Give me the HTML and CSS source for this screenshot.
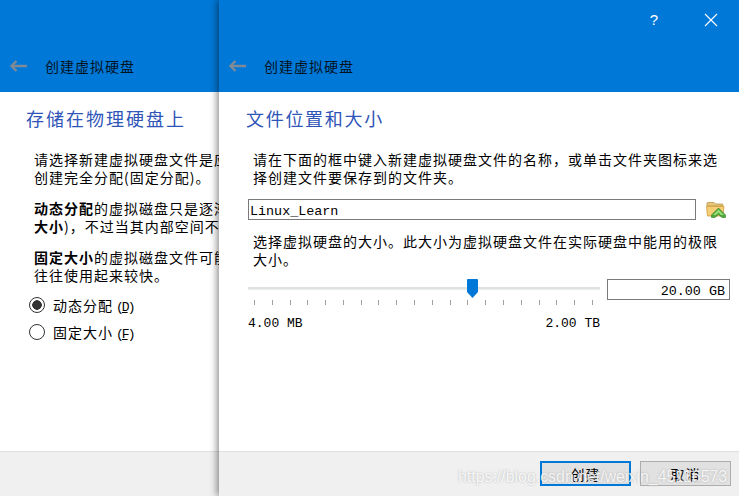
FILE: index.html
```html
<!DOCTYPE html>
<html lang="zh-CN">
<head>
    <meta charset="UTF-8">
    <meta name="viewport" content="width=device-width, initial-scale=1.0">
    <title>创建虚拟硬盘</title>
    <link rel="stylesheet" href="styles.css">
</head>
<body>
    <div class="desktop">
        <!-- window behind, cut off by the front one -->
        <div class="window back-window">
            <div class="header">
                <div class="title-row">
                    <svg class="back-arrow" width="17" height="12" viewBox="0 0 17 12"><path d="M6.5 1 1.5 6l5 5M2 6h15" fill="none" stroke="#7f8a96" stroke-width="2.4"/></svg>
                    <span class="header-title">创建虚拟硬盘</span>
                </div>
            </div>
            <div class="content back-content">
                <h2 class="page-title wide-title">存储在物理硬盘上</h2>
                <p class="text">请选择新建虚拟硬盘文件是应该根据使用状况来逐渐增大<br>创建完全分配(固定分配)。</p>
                <p class="text"><b>动态分配</b>的虚拟磁盘只是逐渐占用物理硬盘的空间<br><b>大小</b>)，不过当其内部空间不足时也不会自动缩减</p>
                <p class="text"><b>固定大小</b>的虚拟磁盘文件可能需要很长时间来建立<br>往往使用起来较快。</p>
                <div class="radio-group">
                    <div class="radio-row">
                        <span class="radio checked"></span>
                        <span class="radio-label">动态分配<span class="key">(<u>D</u>)</span></span>
                    </div>
                    <div class="radio-row">
                        <span class="radio"></span>
                        <span class="radio-label">固定大小<span class="key">(<u>F</u>)</span></span>
                    </div>
                </div>
            </div>
            <div class="footer"></div>
        </div>

        <div class="window front-window">
            <div class="header">
                <div class="window-buttons">
                    <span class="help">?</span>
                    <svg width="14" height="14" viewBox="0 0 14 14"><path d="M1 1l12 12M13 1 1 13" stroke="#fff" stroke-width="1.1" fill="none"/></svg>
                </div>
                <div class="title-row">
                    <svg class="back-arrow" width="17" height="12" viewBox="0 0 17 12"><path d="M6.5 1 1.5 6l5 5M2 6h15" fill="none" stroke="#7f8a96" stroke-width="2.4"/></svg>
                    <span class="header-title">创建虚拟硬盘</span>
                </div>
            </div>
            <div class="content front-content">
                <h2 class="page-title front-title">文件位置和大小</h2>
                <p class="text indent">请在下面的框中键入新建虚拟硬盘文件的名称，或单击文件夹图标来选<br>择创建文件要保存到的文件夹。</p>
                <div class="file-row">
                    <div class="field file-field">Linux_Learn</div>
                    <svg class="folder" width="20" height="18" viewBox="0 0 20 18">
                        <path d="M1 4V2.500Q1 1.500 2 1.500H8L9.500 3H16Q17 3 17 4V5H1Z" fill="#e8c878" stroke="#b8924a" stroke-width=".8"/>
                        <path d="M.5 5.500H18L17 15H1.500Z" fill="#f6ce74" stroke="#d09a40" stroke-width=".8"/>
                        <path d="M12.500 7 19.500 14V16.500H16L12.500 13.500 9 16.500H5.500V14Z" fill="#4fa83c" stroke="#2f7d26" stroke-width=".6"/>
                        <path d="M12.500 8.500 7 14H10L12.500 11.500 15 14H18Z" fill="#9adf7a"/>
                    </svg>
                </div>
                <p class="text indent size-text">选择虚拟硬盘的大小。此大小为虚拟硬盘文件在实际硬盘中能用的极限<br>大小。</p>
                <div class="size-row">
                    <div class="slider">
                        <div class="track">
                            <svg class="thumb" width="11" height="19" viewBox="0 0 11 19"><path d="M0 1Q0 0 1 0H10Q11 0 11 1V13L5.500 19 0 13Z" fill="#0078d7"/></svg>
                        </div>
                        <div class="ticks" id="ticks"></div>
                        <div class="range-labels"><span>4.00 MB</span><span>2.00 TB</span></div>
                    </div>
                    <div class="field size-field">20.00 GB</div>
                </div>
            </div>
            <div class="footer">
                <button class="btn btn-default">创建</button>
                <button class="btn">取消</button>
            </div>
            <div class="watermark">https://blog.csdn.net/weixin_45116573</div>
        </div>
    </div>

    <script>
        // 20 slider ticks
        const ticks = document.getElementById('ticks');
        for (let i = 0; i < 20; i++) {
            ticks.appendChild(document.createElement('i'));
        }
    </script>
</body>
</html>
```

FILE: styles.css
```css
* {
    margin: 0;
    padding: 0;
    box-sizing: border-box;
}

body {
    background-color: #fff;
    font-family: "Noto Sans CJK SC", sans-serif;
    color: #000;
    overflow: hidden;
}

.desktop {
    display: flex;
    width: 739px;
    height: 496px;
    overflow: hidden;
}

.window {
    display: flex;
    flex-direction: column;
    height: 100%;
    background-color: white;
}

.back-window {
    width: 219px;
    flex: none;
    overflow: hidden;
}

.front-window {
    flex: 1;
    position: relative;
    box-shadow: -2px 0 7px rgba(0, 0, 0, 0.45);
}

.header {
    height: 92px;
    flex: none;
    display: flex;
    flex-direction: column;
    justify-content: flex-end;
    background-color: #0078d7;
}

.window-buttons {
    display: flex;
    justify-content: flex-end;
    align-items: center;
    gap: 46px;
    padding-right: 21px;
    margin-bottom: 27px;
}

.help {
    color: white;
    font-family: "Liberation Sans", sans-serif;
    font-size: 15px;
    line-height: 18px;
}

.title-row {
    display: flex;
    align-items: center;
    gap: 18px;
    padding: 0 0 16px 10px;
    height: 36px;
}

.header-title {
    font-size: 14px;
    line-height: 20px;
    letter-spacing: 1px;
    color: #03121f;
}

.content {
    flex: 1;
    min-height: 0;
    white-space: nowrap;
}

.back-content {
    padding: 13px 0 0 26px;
}

.front-content {
    padding: 13px 9px 0 29px;
}

.page-title {
    font-size: 18px;
    font-weight: normal;
    line-height: 26px;
    letter-spacing: 1.7px;
    color: #2f55b8;
    margin-bottom: 19px;
}

.front-title {
    margin-left: -2px;
}

.wide-title {
    letter-spacing: 2px;
}

.text {
    font-size: 14px;
    line-height: 18px;
    letter-spacing: 1px;
    margin: 0 0 13px 8px;
}

.indent {
    margin-left: 5px;
}

.radio-group {
    margin-top: -6px;
}

.radio-row {
    display: flex;
    align-items: center;
    gap: 8px;
    height: 27px;
    margin-left: 3px;
}

.radio {
    width: 16px;
    height: 16px;
    border: 1px solid #333;
    border-radius: 50%;
    background-color: white;
}

.radio.checked {
    background: radial-gradient(circle, #333 0 4.5px, white 5px);
}

.radio-label {
    font-size: 14px;
    letter-spacing: 1px;
}

.key {
    font-family: "Liberation Mono", monospace;
    font-size: 13px;
    letter-spacing: -2px;
    margin-left: 3px;
}

.file-row {
    display: flex;
    align-items: center;
    gap: 10px;
    margin-top: 2px;
}

.field {
    font-family: "Liberation Mono", monospace;
    font-size: 13.4px;
    border: 1px solid #7a7a7a;
    height: 21px;
    line-height: 19px;
    padding: 2px 1px 0;
    background-color: white;
}

.file-field {
    flex: 1;
}

.folder {
    flex: none;
    margin-right: 4px;
}

.size-text {
    margin-top: 12px;
    margin-bottom: 12px;
}

.size-row {
    display: flex;
    align-items: flex-start;
    gap: 7px;
}

.slider {
    width: 352px;
    flex: none;
}

.track {
    position: relative;
    height: 3px;
    margin-top: 7px;
    background-color: #dfe3df;
    border-bottom: 1px solid #e9ece9;
}

.thumb {
    position: absolute;
    left: 219px;
    top: -8px;
}

.ticks {
    display: flex;
    justify-content: space-between;
    padding: 0 7px 0 6px;
    margin-top: 10px;
    height: 5px;
}

.ticks i {
    display: block;
    width: 1px;
    height: 5px;
    background-color: #a0a0a0;
}

.range-labels {
    display: flex;
    justify-content: space-between;
    margin-top: 11px;
    font-family: "Liberation Mono", monospace;
    font-size: 13px;
    line-height: 16px;
}

.size-field {
    flex: 1;
    text-align: right;
    margin-top: -1px;
    padding-right: 4px;
}

.footer {
    height: 45px;
    flex: none;
    display: flex;
    justify-content: flex-end;
    align-items: flex-start;
    gap: 9px;
    padding: 9px 8px 0 0;
    background-color: #f0f0f0;
    border-top: 1px solid #dfdfdf;
}

.btn {
    width: 91px;
    height: 25px;
    font-family: "Noto Sans CJK SC", sans-serif;
    font-size: 14px;
    letter-spacing: 1px;
    background-color: #e1e1e1;
    border: 1px solid #adadad;
    color: #000;
}

.btn-default {
    border: 2px solid #0078d7;
}

.watermark {
    position: absolute;
    left: 239px;
    top: 468px;
    font-family: "Liberation Sans", sans-serif;
    font-size: 15.9px;
    line-height: 18px;
    color: rgba(255, 255, 255, 0.85);
    text-shadow: 0 0 2px rgba(130, 130, 130, 0.55);
    white-space: nowrap;
}
```
